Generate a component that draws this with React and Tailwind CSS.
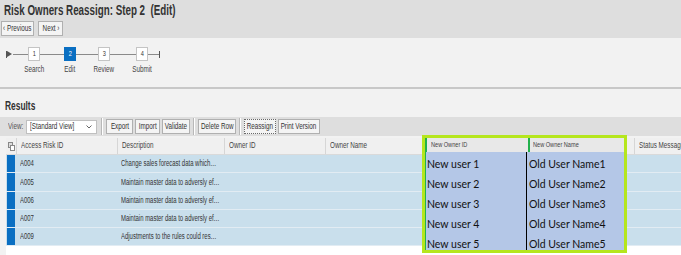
import React from "react";

const COLS = [
  { key: "id", label: "Access Risk ID", w: "w-[101px]" },
  { key: "desc", label: "Description", w: "w-[107px]" },
  { key: "owner", label: "Owner ID", w: "w-[101px]" },
  { key: "ownerName", label: "Owner Name", w: "w-[97px]" },
  { key: "newId", label: "", w: "w-[106px]" },
  { key: "newName", label: "", w: "w-[106px]" },
  { key: "status", label: "Status Message", w: "flex-1" },
];

const ROWS = [
  { id: "A004", desc: "Change sales forecast data which…", user: "New user 1", name: "Old User Name1" },
  { id: "A005", desc: "Maintain master data to adversly ef…", user: "New user 2", name: "Old User Name2" },
  { id: "A006", desc: "Maintain master data to adversly ef…", user: "New user 3", name: "Old User Name3" },
  { id: "A007", desc: "Maintain master data to adversly ef…", user: "New user 4", name: "Old User Name4" },
  { id: "A009", desc: "Adjustments to the rules could res…", user: "New user 5", name: "Old User Name5" },
];

const STEPS = [
  { n: 1, label: "Search", line: "w-[24px]" },
  { n: 2, label: "Edit", line: "w-[22px]", active: true },
  { n: 3, label: "Review", line: "w-[26px]" },
  { n: 4, label: "Submit", line: "w-[11px]" },
];

// the screenshot's text is squeezed sideways, so squeeze ours the same way
function N({ children, center }) {
  return (
    <span
      className={
        "inline-block whitespace-nowrap scale-x-[0.7] " + (center ? "origin-center" : "origin-left")
      }
    >
      {children}
    </span>
  );
}

function SmallButton({ children, w, focus }) {
  return (
    <button
      className={
        w +
        " shrink-0 h-[15px] flex items-center justify-center bg-[#f4f4f4] border text-[9px] leading-[13px] text-[#333] " +
        (focus ? "border-[#6a6a6a] border-dotted" : "border-[#b0b0b0]")
      }
    >
      <N center>{children}</N>
    </button>
  );
}

function Sep() {
  return <div className="w-[2px] h-[17px] border-l border-[#b8b8b8] border-r border-r-white mx-[1px]" />;
}

export default function App() {
  return (
    <div className="w-[681px] h-[255px] overflow-hidden bg-[#f2f2f2] text-[#333] font-['Liberation_Sans',Arial,sans-serif]">
      {/* title bar */}
      <div className="h-[38px] bg-[#dedede] pl-[4px] pt-[1px]">
        <h1 className="text-[14px] leading-[18px] font-bold text-[#333]">
          <N>Risk Owners Reassign: Step 2&nbsp; (Edit)</N>
        </h1>
        <div className="flex gap-[4px] mt-[2px] -ml-[3px]">
          <SmallButton w="w-[33px]">‹ Previous</SmallButton>
          <SmallButton w="w-[25px]">Next ›</SmallButton>
        </div>
      </div>

      {/* stepper */}
      <div className="h-[51px] border-b-2 border-[#c8c8c8] pt-[9px] pl-[6px]">
        <div className="flex items-start">
          <div className="flex items-center h-[14px] w-[7px]">
            <div className="w-[1px] h-[7px] bg-[#555]" />
            <div className="w-0 h-0 border-y-[3px] border-y-transparent border-l-[5px] border-l-[#555]" />
          </div>
          <div className="w-[15px] h-px bg-[#8a8a8a] mt-[7px]" />
          {STEPS.map((s) => (
            <React.Fragment key={s.n}>
              <div className="flex flex-col items-center w-[12px]">
                <div
                  className={
                    "w-[12px] h-[14px] flex items-center justify-center text-[8px] leading-none " +
                    (s.active
                      ? "bg-[#0a6fc2] text-white border border-[#0a6fc2]"
                      : "bg-white border border-[#c4c4c4] text-[#333]")
                  }
                >
                  <N center>{s.n}</N>
                </div>
                <div className="text-[9px] leading-[10px] mt-[3px] text-[#444]">
                  <N center>{s.label}</N>
                </div>
              </div>
              <div className={s.line + " h-px bg-[#8a8a8a] mt-[7px]"} />
            </React.Fragment>
          ))}
          <div className="flex items-center h-[14px]">
            <div className="w-[1px] h-[7px] bg-[#555]" />
          </div>
        </div>
      </div>

      {/* results */}
      <div className="h-[28px] flex items-end pl-[5px] pb-[5px]">
        <div className="text-[12px] leading-[12px] font-bold text-[#333]">
          <N>Results</N>
        </div>
      </div>

      {/* toolbar */}
      <div className="h-[19px] bg-[#dedede] flex items-center pl-[8px] gap-[2px] text-[9px]">
        <span className="w-[16px] text-[#555]">
          <N>View:</N>
        </span>
        <div className="w-[71px] shrink-0 h-[14px] bg-white border border-[#c0c0c0] flex items-center pl-[3px] pr-[4px] mr-[1px]">
          <span className="w-[54px] shrink-0 text-[#333]">
            <N>[Standard View]</N>
          </span>
          <svg className="shrink-0 ml-auto" width="6" height="4" viewBox="0 0 6 4">
            <polyline points="0.5,0.5 3,3 5.5,0.5" fill="none" stroke="#666" strokeWidth="1" />
          </svg>
        </div>
        <Sep />
        <SmallButton w="w-[27px]">Export</SmallButton>
        <SmallButton w="w-[25px]">Import</SmallButton>
        <SmallButton w="w-[28px]">Validate</SmallButton>
        <Sep />
        <SmallButton w="w-[38px]">Delete Row</SmallButton>
        <Sep />
        <SmallButton w="w-[32px]" focus>Reassign</SmallButton>
        <SmallButton w="w-[42px]">Print Version</SmallButton>
      </div>

      {/* table */}
      <div className="relative ml-[6px] mt-[2px] bg-white h-[120px]">
        <div className="flex h-[17px] bg-[#f0f0f0] border-b border-[#dadada]">
          <div className="w-[10px] flex items-center justify-center">
            <div className="relative w-[7px] h-[9px]">
              <div className="absolute left-0 top-0 w-[5px] h-[6px] border border-[#888] bg-[#ddd]" />
              <div className="absolute left-[2px] top-[3px] w-[5px] h-[6px] border border-[#888] bg-white" />
            </div>
          </div>
          {COLS.map((c) => (
            <div
              key={c.key}
              className={c.w + " shrink-0 border-l border-[#d6d6d6] pl-[4px] flex items-center text-[9px] text-[#444] overflow-hidden"}
            >
              {c.label && <N>{c.label}</N>}
            </div>
          ))}
        </div>
        {ROWS.map((r) => (
          <div key={r.id} className="flex h-[18.3px] bg-[#c9dfec] border-b border-[#e2ecf3]">
            <div className="w-[10px] flex justify-center">
              <div className="w-[8px] h-full bg-[#0a6fc2]" />
            </div>
            <div className="w-[101px] shrink-0 pl-[4px] flex items-center text-[8.5px] text-[#333]">
              <N>{r.id}</N>
            </div>
            <div className="w-[107px] shrink-0 pl-[4px] flex items-center text-[8.5px] text-[#333]">
              <N>{r.desc}</N>
            </div>
            <div className="flex-1" />
          </div>
        ))}

        {/* highlighted columns */}
        <div className="absolute left-[416px] top-[-3px] w-[205px] h-[118px] border-[3px] border-[#b5e61d] bg-[#b4c7e7] flex flex-col">
          <div className="flex h-[14px] shrink-0 bg-[#e8e8e8]">
            <div className="w-[103px] border-l-2 border-[#22b14c] pl-[4px] flex items-center text-[8px] text-[#444]">
              <N>New Owner ID</N>
            </div>
            <div className="flex-1 border-l-2 border-[#22b14c] pl-[3px] flex items-center text-[8px] text-[#444]">
              <N>New Owner Name</N>
            </div>
          </div>
          <div className="flex flex-1 min-h-0 font-['Lato',sans-serif] text-[10.5px] text-[#111]">
            <div className="w-[101px] border-l border-[#22b14c] flex flex-col">
              {ROWS.map((r) => (
                <div key={r.id} className="h-[20px] shrink-0 flex items-center pt-[5px] pl-[1px]">
                  {r.user}
                </div>
              ))}
            </div>
            <div className="flex-1 border-l border-black flex flex-col">
              {ROWS.map((r) => (
                <div key={r.id} className="h-[20px] shrink-0 flex items-center pt-[5px] pl-[2px]">
                  {r.name}
                </div>
              ))}
            </div>
          </div>
        </div>
      </div>
    </div>
  );
}
